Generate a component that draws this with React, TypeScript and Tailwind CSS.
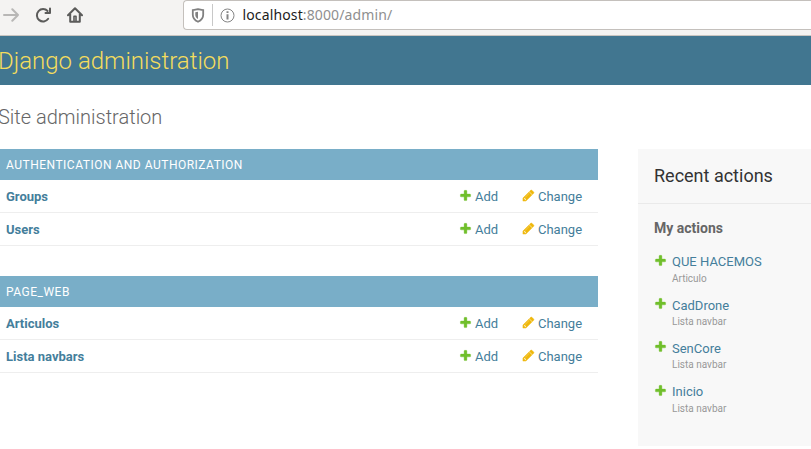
import React from "react";

function PlusIcon() {
  return (
    <svg className="size-[13px] shrink-0" viewBox="0 0 1792 1792" fill="#70bf2b" stroke="#70bf2b" strokeWidth="50">
      <path d="M1600 796v192q0 40-28 68t-68 28h-416v416q0 40-28 68t-68 28h-192q-40 0-68-28t-28-68v-416h-416q-40 0-68-28t-28-68v-192q0-40 28-68t68-28h416v-416q0-40 28-68t68-28h192q40 0 68 28t28 68v416h416q40 0 68 28t28 68z" />
    </svg>
  );
}

function PencilIcon() {
  return (
    <svg className="size-[13px] shrink-0" viewBox="0 0 1792 1792" fill="#efb80b" stroke="#efb80b" strokeWidth="60">
      <path d="M491 1536l91-91-235-235-91 91v107h128v128h107zm523-928q0-22-22-22-10 0-17 7l-542 542q-7 7-7 17 0 22 22 22 10 0 17-7l542-542q7-7 7-17zm-54-192l416 416-832 832h-416v-416zm683 96q0 53-37 90l-166 166-416-416 166-165q36-38 90-38 53 0 91 38l235 234q37 39 37 91z" />
    </svg>
  );
}

function BrowserBar() {
  return (
    <div className="flex h-9 items-start border-b border-[#c9c5c1] bg-[#f4f3f2]">
      <svg className="mt-[7px] ml-[3px] h-4 w-4 shrink-0" viewBox="0 0 16 16" fill="none" stroke="#b8b7b6" strokeWidth="2" strokeLinecap="round" strokeLinejoin="round">
        <path d="M1 8h14M9.3 2.2L15 8l-5.700 5.800" />
      </svg>
      <svg className="mt-[7px] ml-4 h-4 w-4 shrink-0" viewBox="0 0 16 16" fill="none" stroke="#5b5b5a" strokeWidth="2" strokeLinecap="round">
        <path d="M13.200 11.800A6.200 6.200 0 1 1 12.600 4" />
        <path d="M15 1.500V6h-4.500" strokeWidth="2" strokeLinejoin="round" />
      </svg>
      <svg className="mt-[7px] ml-4 h-4 w-4 shrink-0" viewBox="0 0 16 16" fill="none" stroke="#5b5b5a" strokeWidth="2" strokeLinecap="round" strokeLinejoin="round">
        <path d="M1 8.300L8 1.300l7 7M3.200 7v7.800h9.600V7" />
        <path d="M7 14V9.200h2V14" strokeWidth="1.600" />
      </svg>
      <div className="ml-[100px] flex h-[30px] flex-1 items-center rounded-l-[4px] border border-r-0 border-[#c4c0bc] bg-white">
        <svg className="ml-[7px] h-[15px] w-[14px] shrink-0" viewBox="0 0 14 15" fill="none" stroke="#808080">
          <path d="M7 1.200c2 .6 3.500.8 5.200.9v4.600c0 3.200-2 5.600-5.200 7-3.200-1.400-5.200-3.800-5.200-7V2.100C3.500 2 5 1.800 7 1.200z" strokeWidth="1.800" />
          <path d="M7 3.800v7.300C5.200 10 4.300 8.600 4.300 6.700V4.300z" fill="#808080" stroke="none" />
        </svg>
        <div className="ml-[7px] h-[22px] w-px bg-[#c8c8c8]" />
        <svg className="ml-[7px] size-[15px] shrink-0" viewBox="0 0 15 15">
          <circle cx="7.500" cy="7.500" r="6.500" fill="none" stroke="#858585" strokeWidth="1" />
          <path d="M6.500 3.300h2v1.800h-2zM6.500 6.300h2v5.200h-2z" fill="#858585" />
        </svg>
        <div className="ml-[7.500px] whitespace-nowrap font-['Noto_Sans','Open_Sans',sans-serif] text-[14px] leading-5 tracking-[0.13px] text-[#8f8f8f]">
          <span className="text-[#1c1c1c]">localhost</span>:8000/admin/
        </div>
      </div>
    </div>
  );
}

function AppModule({ name, models }: { name: string; models: string[] }) {
  return (
    <section className="mb-[30px]">
      <h2 className="h-[31px] bg-[#79aec8] pl-1.5 text-[12px] leading-[32px] tracking-[0.5px] text-white uppercase">
        {name}
      </h2>
      {models.map((model) => (
        <div key={model} className="flex h-[33px] items-start border-b border-[#eeeeee] pt-[9px] pr-4 pl-1.5 text-[13px] leading-4 text-[#447e9b]">
          <span className="flex-1 font-bold">{model}</span>
          <a className="flex w-[63px] items-start gap-[3px]">
            <PlusIcon />
            <span>Add</span>
          </a>
          <a className="flex w-[60px] items-start gap-[3px]">
            <PencilIcon />
            <span>Change</span>
          </a>
        </div>
      ))}
    </section>
  );
}

const actions = [
  { title: "QUE HACEMOS", kind: "Articulo", row: "h-[43px]", titleBox: "h-[18px]" },
  { title: "CadDrone", kind: "Lista navbar", row: "h-[43px]", titleBox: "h-[18px] pt-px" },
  { title: "SenCore", kind: "Lista navbar", row: "h-[44px]", titleBox: "h-[18px] pt-px" },
  { title: "Inicio", kind: "Lista navbar", row: "h-[43px]", titleBox: "h-[18px]" },
];

export default function App() {
  return (
    <div className="h-[449px] w-[811px] overflow-hidden bg-white font-[Roboto,sans-serif]">
      <BrowserBar />
      <header className="h-[49px] bg-[#417690]">
        <h1 className="-ml-[2px] text-[24px] leading-[50px] font-light text-[#f5dd5d]">Django administration</h1>
      </header>
      <h1 className="-ml-[2px] h-16 pt-5 text-[20px] leading-6 font-light text-[#666666]">Site administration</h1>
      <div className="flex items-start gap-10">
        <main className="w-[598px] shrink-0">
          <AppModule name="Authentication and Authorization" models={["Groups", "Users"]} />
          <AppModule name="Page_Web" models={["Articulos", "Lista navbars"]} />
        </main>
        <aside className="h-[297px] flex-1 bg-[#f8f8f8]">
          <h2 className="h-[55px] border-b border-[#eaeaea] pl-4 text-[18px] leading-[53px] text-[#333333]">Recent actions</h2>
          <h3 className="mt-4 pl-4 text-[14px] leading-4 font-bold text-[#666666]">My actions</h3>
          <ul className="mt-[18px] pl-4">
            {actions.map((action) => (
              <li key={action.title} className={`flex gap-[5px] ${action.row}`}>
                <PlusIcon />
                <div>
                  <div className={`text-[13px] leading-4 text-[#447e9b] ${action.titleBox}`}>{action.title}</div>
                  <div className="text-[10px] leading-[14px] text-[#999999]">{action.kind}</div>
                </div>
              </li>
            ))}
          </ul>
        </aside>
      </div>
    </div>
  );
}
